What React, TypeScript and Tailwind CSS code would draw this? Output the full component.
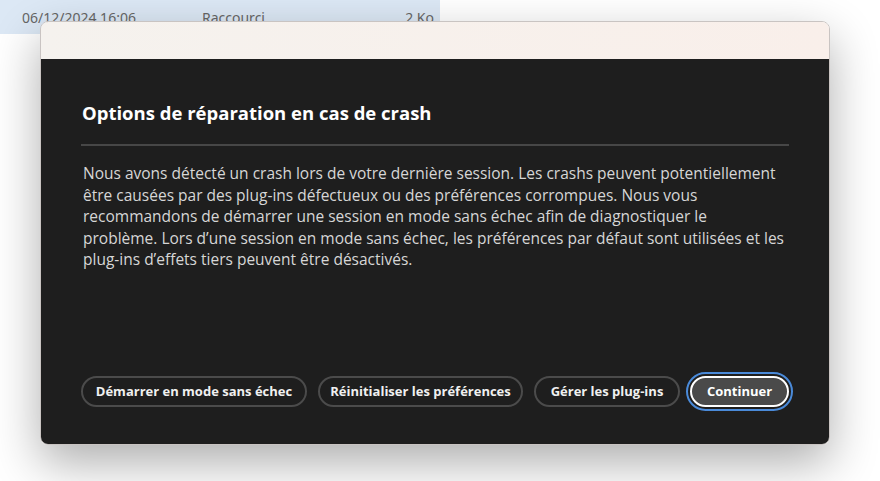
import React from 'react';

const BODY_LINES = [
  "Nous avons détecté un crash lors de votre dernière session. Les crashs peuvent potentiellement",
  "être causées par des plug-ins défectueux ou des préférences corrompues. Nous vous",
  "recommandons de démarrer une session en mode sans échec afin de diagnostiquer le",
  "problème. Lors d’une session en mode sans échec, les préférences par défaut sont utilisées et les",
  "plug-ins d’effets tiers peuvent être désactivés.",
];

const PillButton = ({ label, className }: { label: string; className: string }) => (
  <button className={`h-[31px] rounded-full border-2 border-[#4b4b4b] bg-[#1e1e1e] text-[13px] font-bold text-[#f0f0f0] whitespace-nowrap ${className}`}>
    {label}
  </button>
);

export default function App() {
  return (
    <div
      className="relative w-[880px] h-[481px] overflow-hidden bg-white"
      style={{ fontFamily: '"Open Sans", "Noto Sans", sans-serif' }}
    >
      {/* file list row behind the dialog */}
      <div
        className="flex items-center h-[34px] w-[440px] bg-[#dce8f5] text-[14px] text-[#666666]"
        style={{ fontFamily: '"Noto Sans", sans-serif' }}
      >
        <span className="pl-[22px] w-[202px]">06/12/2024 16:06</span>
        <span className="w-[120px]">Raccourci</span>
        <span className="flex-1 text-right pr-[6px]">2 Ko</span>
      </div>

      {/* crash dialog */}
      <div className="absolute left-[40px] top-[21px] w-[790px] h-[424px] rounded-[8px] overflow-hidden border border-[#c9c4c2] shadow-[0_18px_48px_rgba(0,0,0,0.32)] flex flex-col">
        <div className="h-[37px] bg-gradient-to-r from-[#f5f2ee] to-[#f9efea] shrink-0" />
        <div className="flex-1 bg-[#1e1e1e] flex flex-col px-[40px] pt-[42px] pb-[37px]">
          <h1 className="text-[18.5px] font-bold text-white leading-[24px] pl-[1px]">
            Options de réparation en cas de crash
          </h1>
          <div className="mt-[19px] h-[2px] bg-[#474747]" />
          <div className="mt-[17px] pl-[2px] text-[15.5px] leading-[21.5px] text-[#d6d6d6]">
            {BODY_LINES.map((line) => (
              <div key={line} className="whitespace-nowrap">{line}</div>
            ))}
          </div>
          <div className="mt-auto -mr-[4px] flex items-center justify-end gap-[11px]">
            <PillButton label="Démarrer en mode sans échec" className="w-[226px]" />
            <PillButton label="Réinitialiser les préférences" className="w-[205px]" />
            <PillButton label="Gérer les plug-ins" className="w-[146px]" />
            <div className="rounded-full border-2 border-[#4a8ad9] p-[2px] -my-[4px] -ml-[5px]">
              <button className="h-[31px] w-[99px] rounded-full border-2 border-white bg-[#4a4a4a] text-[13px] font-bold text-white">
                Continuer
              </button>
            </div>
          </div>
        </div>
      </div>
    </div>
  );
}
